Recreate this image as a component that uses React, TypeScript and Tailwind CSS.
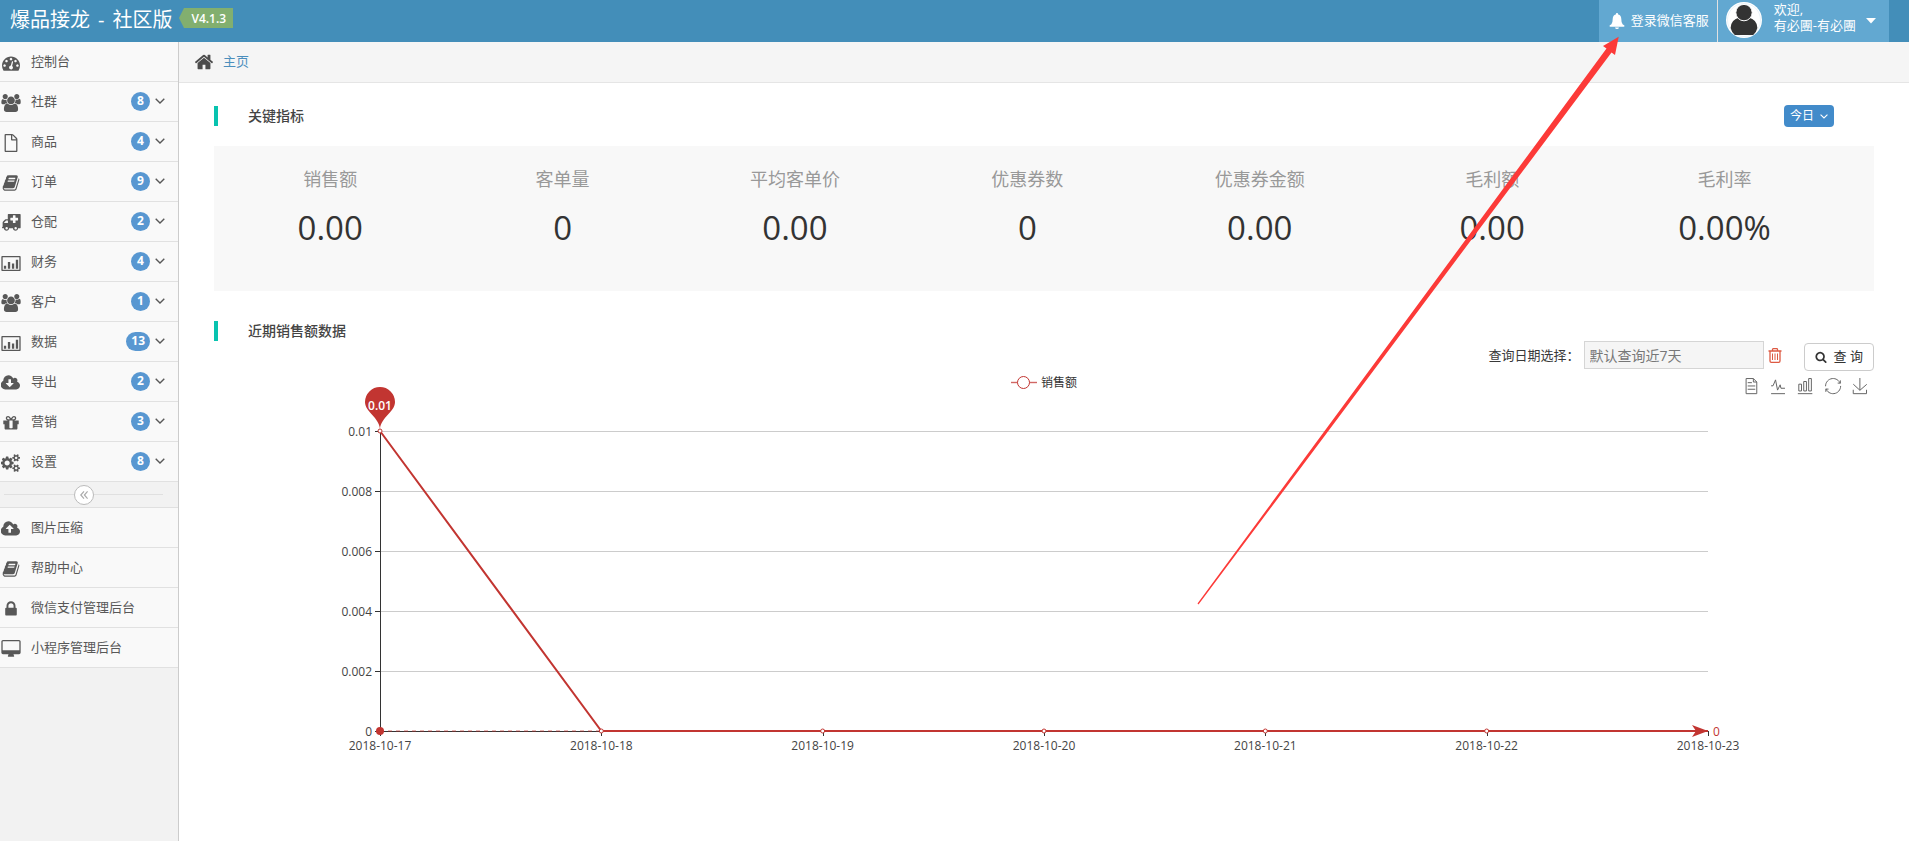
import React from "react";

const ICONS = {
  dashboard: {
    w: 1792,
    d: "M384 1152q0-53-37.5-90.5t-90.5-37.5-90.5 37.5-37.5 90.5 37.5 90.5 90.5 37.5 90.5-37.5 37.5-90.5zm192-448q0-53-37.5-90.5t-90.5-37.5-90.5 37.5-37.5 90.5 37.5 90.5 90.5 37.5 90.5-37.5 37.5-90.5zm428 481l101-382q6-26-7.5-48.5t-38.5-29.5-48 6.5-30 39.5l-101 382q-60 5-107 43.5t-63 98.5q-20 77 20 146t117 89 146-20 89-117q16-60-6-117t-72-91zm660-33q0-53-37.5-90.5t-90.5-37.5-90.5 37.5-37.5 90.5 37.5 90.5 90.5 37.5 90.5-37.5 37.5-90.5zm-640-640q0-53-37.5-90.5t-90.5-37.5-90.5 37.5-37.5 90.5 37.5 90.5 90.5 37.5 90.5-37.5 37.5-90.5zm448 192q0-53-37.5-90.5t-90.5-37.5-90.5 37.5-37.5 90.5 37.5 90.5 90.5 37.5 90.5-37.5 37.5-90.5zm320 448q0 261-141 483-19 29-54 29h-1402q-35 0-54-29-141-221-141-483 0-182 71-348t191-286 286-191 348-71 348 71 286 191 191 286 71 348z",
  },
  users: {
    w: 1920,
    d: "M593 896q-162 5-265 128h-134q-82 0-138-40.5t-56-118.5q0-353 124-353 6 0 43.5 21t97.5 42.5 119 21.5q67 0 133-23-5 37-5 66 0 159 90 293zm1071 637q0 120-73 189.5t-194 69.5h-874q-121 0-194-69.5t-73-189.5q0-53 3.5-103.5t14-109 26.5-108.5 43-97.5 62-81 85.5-53.5 111.5-20q10 0 43 21.5t73 48 107 48 135 21.5 135-21.5 107-48 73-48 43-21.5q61 0 111.5 20t85.5 53.5 62 81 43 97.5 26.5 108.5 14 109 3.5 103.5zm-1024-1277q0 106-75 181t-181 75-181-75-75-181 75-181 181-75 181 75 75 181zm704 384q0 159-112.5 271.5t-271.5 112.5-271.5-112.5-112.5-271.5 112.5-271.5 271.5-112.5 271.5 112.5 112.5 271.5zm576 225q0 78-56 118.5t-138 40.5h-134q-103-123-265-128 90-134 90-293 0-29-5-66 66 23 133 23 59 0 119-21.5t97.5-42.5 43.5-21q124 0 124 353zm-128-609q0 106-75 181t-181 75-181-75-75-181 75-181 181-75 181 75 75 181z",
  },
  file: {
    w: 1792,
    d: "M1468 380q28 28 48 76t20 88v1152q0 40-28 68t-68 28h-1088q-40 0-68-28t-28-68v-1600q0-40 28-68t68-28h640q40 0 88 20t76 48zm-444-244v376h376q-10-29-22-41l-313-313q-12-12-41-22zm384 1528v-1024h-416q-40 0-68-28t-28-68v-416h-512v1536h1024z",
  },
  book: {
    w: 1792,
    d: "M1703 478q40 57 18 129l-275 906q-19 64-76.5 107.5t-122.5 43.5h-923q-77 0-148.5-53.5t-99.5-131.5q-24-67-2-127 0-4 3-27t4-37q1-8-3-21.5t-3-19.5q2-11 8-21t16.5-23.5 16.5-23.5q23-38 45-91.5t30-91.5q3-10 .5-30t-.5-28q3-11 17-28t17-23q21-36 42-92t25-90q1-9-2.5-32t.5-28q4-13 22-30.5t22-22.5q19-26 42.5-84.5t27.5-96.5q1-8-3-25.5t-2-26.5q2-8 9-18t18-23 17-21q8-12 16.5-30.5t15-35 16-36 19.5-32 26.5-23.5 36-11.5 47.5 5.5l-1 3q38-9 51-9h761q74 0 114 56t18 130l-274 906q-36 119-71.5 153.5t-128.5 34.5h-869q-27 0-38 15-11 16-1 43 24 70 144 70h923q29 0 56-15.5t35-41.5l300-987q7-22 5-57 38 15 59 43zm-1064 2q-4 13 2 22.5t20 9.5h608q13 0 25.5-9.5t16.5-22.5l21-64q4-13-2-22.5t-20-9.5h-608q-13 0-25.5 9.5t-16.5 22.5zm-83 256q-4 13 2 22.5t20 9.5h608q13 0 25.5-9.5t16.5-22.5l21-64q4-13-2-22.5t-20-9.5h-608q-13 0-25.5 9.5t-16.5 22.5z",
  },
  ambulance: {
    w: 1920,
    d: "M652 1408a124 124 0 1 0-248 0a124 124 0 1 0 248 0zM272 896h384v-256h-158q-14 2-22 9l-195 195q-7 12-9 22v30zM1548 1408a124 124 0 1 0-248 0a124 124 0 1 0 248 0zM1664 608v-192q0-14-9-23t-23-9h-224v-224q0-14-9-23t-23-9h-192q-14 0-23 9t-9 23v224h-224q-14 0-23 9t-9 23v192q0 14 9 23t23 9h224v224q0 14 9 23t23 9h192q14 0 23-9t9-23v-224h224q14 0 23-9t9-23zM1920 64v1280q0 26-19 45t-45 19h-192q0 106-75 181t-181 75-181-75-75-181h-384q0 106-75 181t-181 75-181-75-75-181h-128q-26 0-45-19t-19-45 19-45 45-19v-416q0-26 13-58t32-51l198-198q19-19 51-32t58-13h160v-448q0-26 19-45t45-19h1152q26 0 45 19t19 45z",
  },
  chart: {
    w: 1920,
    d: "M0 280q0-80 80-80h1760q80 0 80 80v1340q0 80-80 80h-1760q-80 0-80-80zM130 330v1240h1660v-1240zM250 1180h230v290h-230zM650 800h230v670h-230zM1050 940h230v530h-230zM1440 560h230v910h-230z",
  },
  download: {
    w: 1920,
    d: "M1216 928q0-14-9-23t-23-9h-224v-352q0-13-9.5-22.5t-22.5-9.5h-192q-13 0-22.5 9.5t-9.5 22.5v352h-224q-13 0-22.5 9.5t-9.5 22.5q0 14 9 23l352 352q9 9 23 9t23-9l351-351q10-12 10-24zm640 224q0 159-112.5 271.5t-271.5 112.5h-1088q-185 0-316.5-131.5t-131.5-316.5q0-130 70-240t188-165q-2-30-2-43 0-212 150-362t362-150q156 0 285.5 87t188.5 231q71-62 166-62 106 0 181 75t75 181q0 76-41 138 130 31 213.5 135.5t83.5 238.5z",
  },
  upload: {
    w: 1920,
    d: "M1216 864q0-14-9-23l-352-352q-9-9-23-9t-23 9l-351 351q-10 12-10 24 0 14 9 23t23 9h224v352q0 13 9.5 22.5t22.5 9.5h192q13 0 22.5-9.5t9.5-22.5v-352h224q13 0 22.5-9.5t9.5-22.5zm640 288q0 159-112.5 271.5t-271.5 112.5h-1088q-185 0-316.5-131.5t-131.5-316.5q0-130 70-240t188-165q-2-30-2-43 0-212 150-362t362-150q156 0 285.5 87t188.5 231q71-62 166-62 106 0 181 75t75 181q0 76-41 138 130 31 213.5 135.5t83.5 238.5z",
  },
  gift: {
    w: 1792,
    d: "M1056 1356v-716h-320v716q0 25 18 38.5t46 13.5h192q28 0 46-13.5t18-38.5zm-456-844h195l-126-161q-26-31-69-31-40 0-68 28t-28 68 28 68 68 28zm688-96q0-40-28-68t-68-28q-43 0-69 31l-125 161h194q40 0 68-28t28-68zm376 256v320q0 14-9 23t-23 9h-96v416q0 40-28 68t-68 28h-1088q-40 0-68-28t-28-68v-416h-96q-14 0-23-9t-9-23v-320q0-14 9-23t23-9h440q-93 0-158.5-65.5t-65.5-158.5 65.5-158.5 158.5-65.5q107 0 168 77l128 165 128-165q61-77 168-77 93 0 158.5 65.5t65.5 158.5-65.5 158.5-158.5 65.5h440q14 0 23 9t9 23z",
  },
  cogs: {
    w: 1920,
    d: "M832 896q0-106-75-181t-181-75-181 75-75 181 75 181 181 75 181-75 75-181zm768 512q0-52-38-90t-90-38-90 38-38 90q0 53 37.5 90.5t90.5 37.5 90.5-37.5 37.5-90.5zm0-1024q0-52-38-90t-90-38-90 38-38 90q0 53 37.5 90.5t90.5 37.5 90.5-37.5 37.5-90.5zm-384 421v185q0 10-7 19.5t-16 10.5l-155 24q-11 35-32 76 34 48 90 115 7 11 7 20 0 12-7 19-23 30-82.5 89.5t-78.5 59.5q-11 0-21-7l-115-90q-37 19-77 31-11 108-23 155-7 24-30 24h-186q-11 0-20-7.5t-10-17.5l-23-153q-34-10-75-31l-118 89q-7 7-20 7-11 0-21-8-144-133-144-160 0-9 7-19 10-14 41-53t47-61q-23-44-35-82l-152-24q-10-1-17-9.5t-7-19.5v-185q0-10 7-19.5t16-10.5l155-24q11-35 32-76-34-48-90-115-7-11-7-20 0-12 7-20 22-30 82-89t79-59q11 0 21 7l115 90q34-18 77-32 11-108 23-154 7-24 30-24h186q11 0 20 7.5t10 17.5l23 153q34 10 75 31l118-89q8-7 20-7 11 0 21 8 144 133 144 160 0 8-7 19-12 16-42 54t-45 60q23 48 34 82l152 23q10 2 17 10.5t7 19.5zm640 533v140q0 16-149 31-12 27-30 52 51 113 51 138 0 4-4 7-122 71-124 71-8 0-46-47t-52-68q-20 2-30 2t-30-2q-14 21-52 68t-46 47q-2 0-124-71-4-3-4-7 0-25 51-138-18-25-30-52-149-15-149-31v-140q0-16 149-31 13-29 30-52-51-113-51-138 0-4 4-7 4-2 35-20t59-34 30-16q8 0 46 46.5t52 67.5q20-2 30-2t30 2q51-71 92-112l6-2q4 0 124 70 4 3 4 7 0 25-51 138 17 23 30 52 149 15 149 31zm0-1024v140q0 16-149 31-12 27-30 52 51 113 51 138 0 4-4 7-122 71-124 71-8 0-46-47t-52-68q-20 2-30 2t-30-2q-14 21-52 68t-46 47q-2 0-124-71-4-3-4-7 0-25 51-138-18-25-30-52-149-15-149-31v-140q0-16 149-31 13-29 30-52-51-113-51-138 0-4 4-7 4-2 35-20t59-34 30-16q8 0 46 46.5t52 67.5q20-2 30-2t30 2q51-71 92-112l6-2q4 0 124 70 4 3 4 7 0 25-51 138 17 23 30 52 149 15 149 31z",
  },
  lock: {
    w: 1792,
    d: "M640 768h512v-192q0-106-75-181t-181-75-181 75-75 181v192zm832 96v576q0 40-28 68t-68 28h-960q-40 0-68-28t-28-68v-576q0-40 28-68t68-28h32v-192q0-184 132-316t316-132 316 132 132 316v192h32q40 0 68 28t28 68z",
  },
  desktop: {
    w: 1920,
    d: "M1792 992v-832q0-13-9.5-22.5t-22.5-9.5h-1600q-13 0-22.5 9.5t-9.5 22.5v832q0 13 9.5 22.5t22.5 9.5h1600q13 0 22.5-9.5t9.5-22.5zm128-832v1088q0 66-47 113t-113 47h-544q0 37 16 77.5t32 71 16 43.5q0 26-19 45t-45 19h-512q-26 0-45-19t-19-45q0-14 16-44t32-70 16-78h-544q-66 0-113-47t-47-113v-1088q0-66 47-113t113-47h1600q66 0 113 47t47 113z",
  },
  home: {
    w: 1792,
    d: "M1472 992v480q0 26-19 45t-45 19h-384v-384h-256v384h-384q-26 0-45-19t-19-45v-480q0-1 .5-3t.5-3l575-474 575 474q1 2 1 6zm223-69l-62 74q-8 9-21 11h-3q-13 0-21-7l-692-577-692 577q-12 8-24 7-13-2-21-11l-62-74q-8-10-7-23.5t11-21.5l719-599q32-26 76-26t76 26l244 204v-195q0-14 9-23t23-9h192q14 0 23 9t9 23v408l219 182q10 8 11 21.5t-7 23.5z",
  },
  search: {
    w: 1792,
    d: "M1216 832q0-185-131.5-316.5t-316.5-131.5-316.5 131.5-131.5 316.5 131.5 316.5 316.5 131.5 316.5-131.5 131.5-316.5zm512 832q0 52-38 90t-90 38q-54 0-90-38l-343-342q-179 124-399 124-143 0-273.5-55.5t-225-150-150-225-55.5-273.5 55.5-273.5 150-225 225-150 273.5-55.5 273.5 55.5 225 150 150 225 55.5 273.5q0 220-124 399l343 343q37 37 37 90z",
  },
};

type IconName = keyof typeof ICONS;

function Icon({ name, className }: { name: IconName; className: string }) {
  return (
    <svg viewBox={`0 0 ${ICONS[name].w} 1792`} className={className} fill="currentColor" aria-hidden="true">
      <path d={ICONS[name].d} fillRule={name === "ambulance" || name === "chart" ? "evenodd" : undefined} />
    </svg>
  );
}

function Chevron({ className }: { className: string }) {
  return (
    <svg viewBox="0 0 10 6" className={className} fill="none" stroke="currentColor" aria-hidden="true">
      <path d="M0.7 0.7 L5 4.9 L9.3 0.7" strokeWidth="1.4" />
    </svg>
  );
}

type Item = { icon: IconName; label: string; count?: number };

const MENU: Item[] = [
  { icon: "dashboard", label: "控制台" },
  { icon: "users", label: "社群", count: 8 },
  { icon: "file", label: "商品", count: 4 },
  { icon: "book", label: "订单", count: 9 },
  { icon: "ambulance", label: "仓配", count: 2 },
  { icon: "chart", label: "财务", count: 4 },
  { icon: "users", label: "客户", count: 1 },
  { icon: "chart", label: "数据", count: 13 },
  { icon: "download", label: "导出", count: 2 },
  { icon: "gift", label: "营销", count: 3 },
  { icon: "cogs", label: "设置", count: 8 },
];

const LINKS: Item[] = [
  { icon: "upload", label: "图片压缩" },
  { icon: "book", label: "帮助中心" },
  { icon: "lock", label: "微信支付管理后台" },
  { icon: "desktop", label: "小程序管理后台" },
];

function MenuList({ items }: { items: Item[] }) {
  return (
    <ul>
      {items.map((item) => (
        <li key={item.label} className="border-b border-[#e1e1e1] bg-[#f9f9f9]">
          <a href="#" className="flex h-[39px] items-center pr-[13px] pb-px text-[13px] text-[#585858]">
            <span className="flex w-[31px] shrink-0 pt-1 pl-px">
              <Icon name={item.icon} className="h-[18px] w-5" />
            </span>
            <span className="grow pb-px leading-5">{item.label}</span>
            {item.count !== undefined && (
              <>
                <span className="mr-[5px] flex h-[19px] min-w-[19px] items-center justify-center rounded-full bg-[#5897d1] px-[5px] text-xs font-bold text-white">
                  {item.count}
                </span>
                <Chevron className="h-[6px] w-[10px]" />
              </>
            )}
          </a>
        </li>
      ))}
    </ul>
  );
}

function Header() {
  return (
    <header className="flex h-[42px] items-stretch bg-[#438eb9] pr-5 text-white">
      <a href="#" className="flex items-center gap-2 pb-[2px] pl-[10px] text-xl leading-6">
        <span>爆品接龙</span>
        <span>-</span>
        <span>社区版</span>
      </a>
      <div className="ml-[7px] flex items-center pb-[6px]">
        <svg viewBox="0 0 5 20" className="h-5 w-[5px]" fill="#82af6f" aria-hidden="true">
          <path d="M5 0 L0 10 L5 20 Z" />
        </svg>
        <span className="flex h-5 items-center bg-[#82af6f] pt-[2px] pr-[7px] pl-[7px] text-xs font-semibold">V4.1.3</span>
      </div>
      <div className="grow" />
      <a href="#" className="flex items-center gap-[6px] bg-[#62a8d1] pr-2 pb-px pl-[10px] text-[13px]">
        <svg viewBox="0 0 16 16" className="size-4" fill="currentColor" aria-hidden="true">
          <path d="M8 0 Q9.2 0 9.2 1.4 Q12.3 2.3 12.3 6 Q12.3 10 13.6 11.3 L15.4 12.6 Q15.8 13.8 14.6 13.8 H1.4 Q0.2 13.8 0.6 12.6 L2.4 11.3 Q3.7 10 3.7 6 Q3.7 2.3 6.8 1.4 Q6.8 0 8 0Z M6 14.4 H10 Q9.7 16 8 16 Q6.3 16 6 14.4Z" />
        </svg>
        登录微信客服
      </a>
      <button type="button" className="flex items-center border-l border-[#e1e1e1] bg-[#62a8d1] pr-[13px] pl-2 text-left text-[13px] leading-4">
        <svg viewBox="0 0 36 36" className="mb-[2px] size-9" aria-hidden="true">
          <circle cx="18" cy="18" r="18" fill="#fff" />
          <circle cx="18" cy="18" r="16.5" fill="none" stroke="#dcebf5" strokeWidth="0.6" />
          <path d="M4.6 26 Q5 17.6 13.4 15.6 Q18 18.6 22.6 15.6 Q31 17.6 31.4 26 Q30.6 29.6 27.2 33 H8.8 Q5.4 29.6 4.6 26Z" fill="#333" />
          <circle cx="18" cy="10.6" r="8.2" fill="#333" stroke="#fff" strokeWidth="1" />
        </svg>
        <span className="mb-2 ml-3">欢迎,<br />有必團-有必團</span>
        <svg viewBox="0 0 10 6" className="ml-[10px] h-[6px] w-[10px]" fill="currentColor" aria-hidden="true">
          <path d="M0 0 H10 L5 5.6Z" />
        </svg>
      </button>
    </header>
  );
}

const METRICS = [
  ["销售额", "0.00"],
  ["客单量", "0"],
  ["平均客单价", "0.00"],
  ["优惠券数", "0"],
  ["优惠券金额", "0.00"],
  ["毛利额", "0.00"],
  ["毛利率", "0.00%"],
];

function SectionTitle({ children }: { children: React.ReactNode }) {
  return (
    <h2 className="flex h-5 items-center border-l-4 border-[#08c3af] pl-[30px] text-sm font-medium text-[#444]">{children}</h2>
  );
}

const SALES = [
  ["2018-10-17", 0.01],
  ["2018-10-18", 0],
  ["2018-10-19", 0],
  ["2018-10-20", 0],
  ["2018-10-21", 0],
  ["2018-10-22", 0],
  ["2018-10-23", 0],
] as const;

const TICKS = ["0.01", "0.008", "0.006", "0.004", "0.002", "0"];

const TOOLS = [
  { x: 1529, d: "M17.5,17.3H33M45.4,29.5h-28M11.5,2v56H51V14.8L38.4,2H11.5zM38.4,2.2v12.7H51M45.4,41.7h-28" },
  { x: 1556, d: "M4.1,28.9h7.1l9.3-22l7.4,38l9.7-19.7l3,12.8h14.9M4.1,58h51.4" },
  { x: 1583, d: "M6.7,22.9h10V48h-10V22.9zM24.9,13h10v35h-10V13zM43.2,2h10v46h-10V2zM3.1,58h53.7" },
  { x: 1611, d: "M47,18.9h9.8V8.7M56.3,20.1C52.1,9,40.5,0.6,26.8,2.1C12.6,3.7,1.6,16.2,2.1,30.6M13,41.1H3.1v10.2M3.7,39.9c4.2,11.1,15.8,19.5,29.5,18c14.2-1.6,25.2-14.1,24.7-28.5" },
  { x: 1638, d: "M4.7,22.9L29.3,45.5L54.7,23.4M4.6,43.6L4.6,58L53.8,58L53.8,43.6M29.2,45.1L29.2,0" },
];

function SalesChart() {
  const left = 166;
  const right = 1494;
  const top = 60;
  const bottom = 360;
  const step = (right - left) / (SALES.length - 1);
  const points = SALES.map(([, v], i) => [left + i * step, bottom - (v / 0.01) * (bottom - top)]);
  return (
    <svg viewBox="0 0 1660 420" className="w-full text-xs" role="img" aria-label="销售额">
      {TICKS.map((t, i) => {
        const y = top + i * 60 + 0.5;
        return (
          <g key={t}>
            <line x1={left} x2={right} y1={y} y2={y} stroke={i === 5 ? "#333" : "#ccc"} />
            <line x1={left - 5} x2={left} y1={y} y2={y} stroke="#333" />
            <text x={left - 8} y={y + 4} textAnchor="end" fill="#444">{t}</text>
          </g>
        );
      })}
      <line x1={left + 0.5} x2={left + 0.5} y1={top} y2={bottom + 5} stroke="#333" />
      {SALES.map(([day], i) => (
        <g key={day}>
          <line x1={Math.round(points[i][0]) + 0.5} x2={Math.round(points[i][0]) + 0.5} y1={bottom} y2={bottom + 5} stroke="#333" />
          <text x={points[i][0]} y={bottom + 19} textAnchor="middle" fill="#444">{day}</text>
        </g>
      ))}
      <line x1={left} x2={right} y1={bottom} y2={bottom} stroke="#c23531" strokeDasharray="4 4" opacity="0.7" />
      <polyline points={points.map((p) => p.join(",")).join(" ")} fill="none" stroke="#c23531" strokeWidth="2" />
      {points.slice(0, -1).map(([x, y]) => (
        <circle key={x} cx={x} cy={y} r="2" fill="#fff" stroke="#c23531" />
      ))}
      <circle cx={left} cy={bottom} r="4" fill="#c23531" />
      <path d={`M${right} ${bottom} L${right - 16} ${bottom - 6} L${right - 12} ${bottom} L${right - 16} ${bottom + 6}Z`} fill="#c23531" />
      <text x={right + 5} y={bottom + 5} fill="#c23531">0</text>
      <path d="M151 31 A15 15 0 1 1 181 31 C181 41 167 46 166 58 C165 46 151 41 151 31Z" fill="#c23531" />
      <text x="166" y="39" textAnchor="middle" fill="#fff" fontWeight="600">0.01</text>
      <g stroke="#c23531" fill="#fff">
        <line x1="797" x2="823" y1="11.5" y2="11.5" strokeWidth="1.4" opacity="0.75" />
        <circle cx="809.5" cy="11.5" r="6" />
      </g>
      <text x="827" y="16" fill="#333">销售额</text>
      {TOOLS.map((tool) => (
        <path key={tool.x} d={tool.d} transform={`translate(${tool.x} 7) scale(0.27)`} fill="none" stroke="#666" strokeWidth="3.7" />
      ))}
    </svg>
  );
}

export default function App() {
  return (
    <div className="relative flex min-h-screen flex-col bg-white font-['Open_Sans','Noto_Sans_CJK_SC',sans-serif] text-[13px] text-[#393939]">
      <Header />
      <div className="flex grow">
        <nav className="w-[179px] shrink-0 border-r border-[#ccc] bg-[#f2f2f2]">
          <MenuList items={MENU} />
          <div className="flex h-[26px] items-center border-b border-[#e0e0e0] pr-[15px] pl-1">
            <span className="h-px w-[70px] bg-[#e0e0e0]" />
            <button type="button" aria-label="收起菜单" className="flex size-5 items-center justify-center rounded-full border border-[#bbb] bg-white text-[#aaa]">
              <svg viewBox="0 0 8 8" className="size-2" fill="none" stroke="currentColor" strokeWidth="1.2" aria-hidden="true">
                <path d="M4 0.4 L0.8 4 L4 7.6 M7.6 0.4 L4.4 4 L7.6 7.6" />
              </svg>
            </button>
            <span className="h-px grow bg-[#e0e0e0]" />
          </div>
          <MenuList items={LINKS} />
        </nav>
        <main className="min-w-0 grow">
          <div className="flex h-[41px] items-center gap-[9px] border-b border-[#e5e5e5] bg-[#f5f5f5] pl-[15px]">
            <Icon name="home" className="size-5 text-[#4c4c4c]" />
            <a href="#" className="text-[#4c8fbd]">主页</a>
          </div>
          <div className="px-[35px]">
            <div className="mt-[22px] flex h-[22px] items-center justify-between pr-10">
              <SectionTitle>关键指标</SectionTitle>
              <button type="button" className="flex h-[22px] items-center gap-[6px] rounded bg-[#428bca] px-[6px] text-xs text-white">
                今日
                <Chevron className="h-[5px] w-2" />
              </button>
            </div>
            <dl className="mt-[19px] flex h-[145px] bg-[#f8f8f8] pt-[19px]">
              {METRICS.map(([label, value]) => (
                <div key={label} className="w-[14%] text-center">
                  <dt className="text-lg leading-7 text-[#999]">{label}</dt>
                  <dd className="mt-[9px] text-[33px] leading-[52px] text-[#333]">{value}</dd>
                </div>
              ))}
            </dl>
            <div className="mt-[30px] flex h-[50px] items-start justify-between">
              <SectionTitle>近期销售额数据</SectionTitle>
              <div className="flex items-start pt-5">
                <label htmlFor="range" className="leading-7">查询日期选择：</label>
                <input
                  id="range"
                  readOnly
                  placeholder="默认查询近7天"
                  className="ml-1 h-7 w-[180px] border border-[#d5d5d5] bg-[#f5f5f5] px-[5px] text-sm placeholder:text-[#777]"
                />
                <button type="button" aria-label="清除" className="ml-1 flex h-7 items-center text-[#dd5a43]">
                  <svg viewBox="0 0 14 15" className="h-[15px] w-[14px]" fill="none" stroke="currentColor" aria-hidden="true">
                    <path d="M0.5 3 H13.5 M4.5 3 V1.5 Q4.5 0.7 5.3 0.7 H8.7 Q9.5 0.7 9.5 1.5 V3 M2 3 V13 Q2 14.3 3.3 14.3 H10.7 Q12 14.3 12 13 V3" strokeWidth="1.3" />
                    <path d="M4.5 5.5 V12 M7 5.5 V12 M9.5 5.5 V12" />
                  </svg>
                </button>
                <button type="button" className="mt-[2px] ml-[22px] flex h-7 items-center gap-[7px] rounded border border-[#ccc] bg-white px-[10px] text-[13px] text-[#333]">
                  <Icon name="search" className="size-3" />
                  查 询
                </button>
              </div>
            </div>
            <SalesChart />
          </div>
        </main>
      </div>
      <svg viewBox="0 0 422 570" className="pointer-events-none absolute top-9 right-[290px] h-[570px] w-[422px]" fill="#fc3a38" aria-hidden="true">
        <path d="M421.7 0.7 L418 19 L414.5 16.5 L1.5 568.5 L0.5 567.5 L409.5 12.5 L406 10Z" />
      </svg>
    </div>
  );
}
